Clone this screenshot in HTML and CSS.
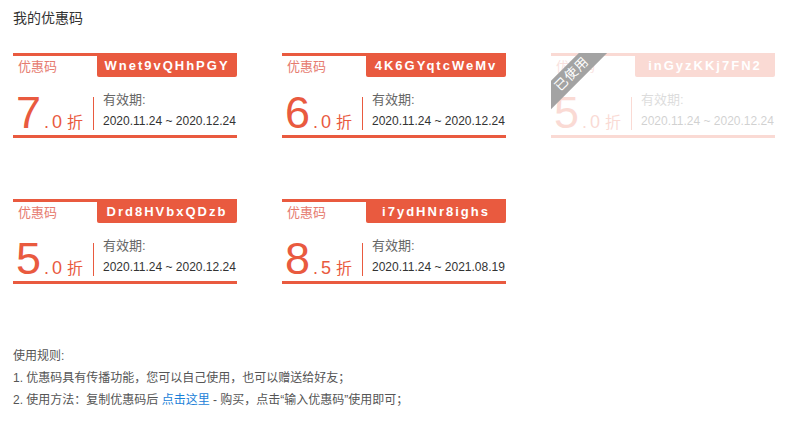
FILE: index.html
```html
<!DOCTYPE html>
<html lang="zh">
<head>
<meta charset="utf-8">
<title>我的优惠码</title>
<link rel="stylesheet" href="styles.css">
</head>
<body>
<div class="page">
  <h1 class="title">我的优惠码</h1>
  <div class="cards">
    <div class="card">
      <div class="card-inner">
        <div class="card-head"><span class="label">优惠码</span><span class="code">Wnet9vQHhPGY</span></div>
        <div class="card-body">
          <div class="discount"><span class="big">7</span><span class="small">.0</span><span class="unit">折</span></div>
          <div class="divider"></div>
          <div class="info"><div class="info-title">有效期:</div><div class="date">2020.11.24 ~ 2020.12.24</div></div>
        </div>
      </div>
    </div>
    <div class="card">
      <div class="card-inner">
        <div class="card-head"><span class="label">优惠码</span><span class="code">4K6GYqtcWeMv</span></div>
        <div class="card-body">
          <div class="discount"><span class="big">6</span><span class="small">.0</span><span class="unit">折</span></div>
          <div class="divider"></div>
          <div class="info"><div class="info-title">有效期:</div><div class="date">2020.11.24 ~ 2020.12.24</div></div>
        </div>
      </div>
    </div>
    <div class="card used">
      <div class="card-inner">
        <div class="card-head"><span class="label">优惠码</span><span class="code">inGyzKKj7FN2</span></div>
        <div class="card-body">
          <div class="discount"><span class="big">5</span><span class="small">.0</span><span class="unit">折</span></div>
          <div class="divider"></div>
          <div class="info"><div class="info-title">有效期:</div><div class="date">2020.11.24 ~ 2020.12.24</div></div>
        </div>
      </div>
      <div class="ribbon">已使用</div>
    </div>
    <div class="card">
      <div class="card-inner">
        <div class="card-head"><span class="label">优惠码</span><span class="code">Drd8HVbxQDzb</span></div>
        <div class="card-body">
          <div class="discount"><span class="big">5</span><span class="small">.0</span><span class="unit">折</span></div>
          <div class="divider"></div>
          <div class="info"><div class="info-title">有效期:</div><div class="date">2020.11.24 ~ 2020.12.24</div></div>
        </div>
      </div>
    </div>
    <div class="card">
      <div class="card-inner">
        <div class="card-head"><span class="label">优惠码</span><span class="code">i7ydHNr8ighs</span></div>
        <div class="card-body">
          <div class="discount"><span class="big">8</span><span class="small">.5</span><span class="unit">折</span></div>
          <div class="divider"></div>
          <div class="info"><div class="info-title">有效期:</div><div class="date">2020.11.24 ~ 2021.08.19</div></div>
        </div>
      </div>
    </div>
  </div>
  <div class="rules">
    <p>使用规则:</p>
    <p>1. 优惠码具有传播功能，您可以自己使用，也可以赠送给好友；</p>
    <p>2. 使用方法：复制优惠码后 <a class="link" href="#">点击这里</a> - 购买，点击“输入优惠码”使用即可；</p>
  </div>
</div>
</body>
</html>
```
FILE: styles.css
```css
* { box-sizing: border-box; }
html, body { margin: 0; padding: 0; background: #fff; }
body {
  font-family: "Liberation Sans", "Noto Sans CJK SC", sans-serif;
  color: #333;
}
.page { padding: 8px 0 0 13px; }
.title {
  margin: 0;
  font-size: 14px;
  font-weight: normal;
  line-height: 20px;
  color: #333;
}
.cards {
  margin-top: 25px;
  display: grid;
  grid-template-columns: 224px 224px 224px;
  column-gap: 45px;
  row-gap: 61px;
}
.card {
  position: relative;
  overflow: hidden;
  width: 224px;
  height: 85px;
}
.card-inner {
  height: 85px;
  border-top: 3px solid #e95a3f;
  border-bottom: 3px solid #e95a3f;
}
.used .card-inner { opacity: 0.22; }
.card-head {
  display: flex;
  justify-content: space-between;
  align-items: flex-start;
  height: 21px;
}
.label {
  padding-left: 5px;
  padding-top: 2px;
  font-size: 13px;
  line-height: 18px;
  color: #e67b6f;
}
.code {
  width: 140px;
  height: 21px;
  background: #e95a3f;
  color: #fff;
  font-weight: bold;
  font-size: 13px;
  line-height: 19px;
  letter-spacing: 2px;
  text-align: center;
  border-radius: 0 0 2px 2px;
}
.card-body {
  display: flex;
  align-items: flex-start;
  height: 58px;
}
.discount {
  width: 80px;
  padding-left: 3px;
  padding-top: 14px;
  color: #e95a3f;
  white-space: nowrap;
  line-height: 44px;
}
.big { font-size: 45px; }
.small { font-size: 18px; letter-spacing: 3px; margin-left: 3px; }
.unit { font-size: 16px; margin-left: 2px; }
.divider {
  width: 1px;
  height: 33px;
  margin-top: 20px;
  background: #e95a3f;
}
.info {
  padding-left: 9px;
  padding-top: 13px;
}
.info-title {
  font-size: 13px;
  line-height: 20px;
  color: #666;
}
.date {
  margin-top: 1px;
  font-size: 12px;
  line-height: 20px;
  color: #333;
}
.ribbon {
  position: absolute;
  left: -39px;
  top: 11px;
  width: 120px;
  height: 20px;
  background: #a3a3a3;
  color: #fff;
  font-size: 13px;
  line-height: 20px;
  text-align: center;
  letter-spacing: 1px;
  transform: rotate(-45deg);
}
.rules {
  margin-top: 61px;
  font-size: 12px;
  line-height: 22px;
  color: #555;
}
.rules p { margin: 0; }
.link { color: #1a7fd8; text-decoration: none; }
```
